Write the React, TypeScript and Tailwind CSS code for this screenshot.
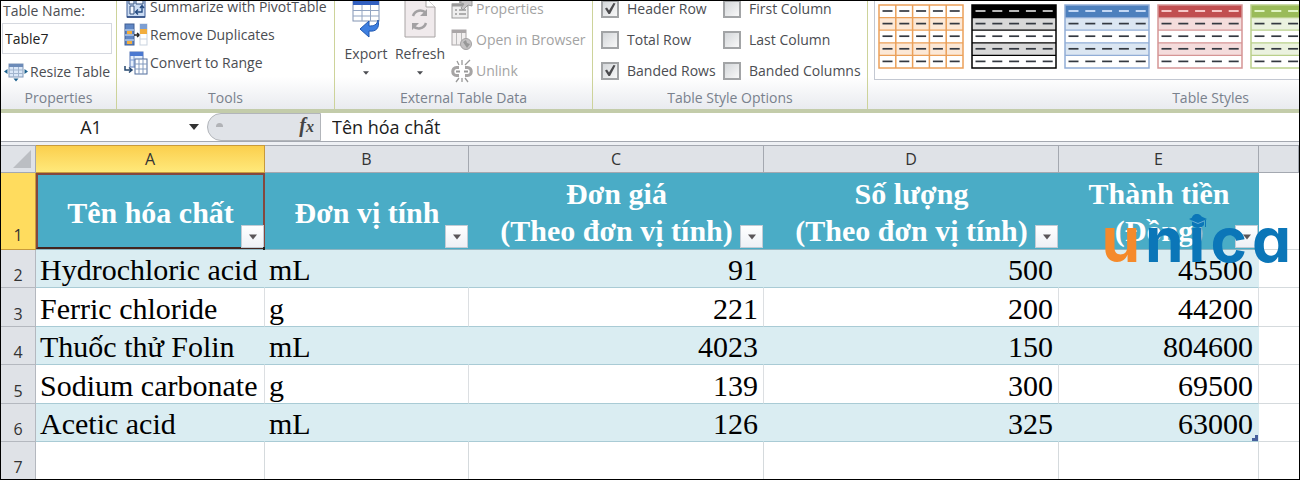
import { useState } from "react";
import type { ReactNode } from "react";

function PivotIcon() {
  return (
    <svg width="24" height="22" viewBox="0 0 24 22" className="shrink-0">
      <rect x="3" y="1" width="18" height="20" fill="#cbdcf3" stroke="#3c5d98" />
      <path d="M3 21h18" stroke="#28477e" strokeWidth="1.500" />
      <path d="M5 4h5v4H5zM12 4h7v4h-7zM6 10h4v8H6z" fill="#f4f8ff" stroke="#33517f" />
      <path d="M18 10v6h-6M16 12l2-2.500 2 2.500M14 13.500L11.500 16l2.500 2.500" fill="none" stroke="#264b80" strokeWidth="1.400" />
    </svg>
  );
}

function DuplicatesIcon() {
  return (
    <svg width="24" height="24" viewBox="0 0 24 24" className="shrink-0">
      <rect x="1" y="1" width="9" height="21" fill="#5f86c4" stroke="#405f93" />
      <path d="M1 7h9M1 12h9M1 17h9" stroke="#dce8f7" />
      <path d="M3 8h5v3H3zM3 18h5v3H3z" fill="#f1ad3e" />
      <path d="M10 12h5M13 10l2.500 2-2.500 2" stroke="#222" fill="none" strokeWidth="1.300" />
      <rect x="16" y="1" width="7" height="21" fill="#fff" stroke="#c9d3df" />
      <rect x="16" y="1" width="7" height="5" fill="#7e9fd2" />
      <rect x="16" y="6" width="7" height="5" fill="#f1ad3e" />
      <path d="M16 16h7" stroke="#c9d3df" />
    </svg>
  );
}

function ConvertIcon() {
  return (
    <svg width="24" height="24" viewBox="0 0 24 24" className="shrink-0">
      <rect x="6" y="1" width="13" height="15" fill="#e4eefb" stroke="#5474b4" />
      <rect x="6" y="1" width="13" height="4" fill="#4a78d0" />
      <path d="M6 9h7M10 5v11" stroke="#7c9bd0" />
      <rect x="11" y="8" width="12" height="15" fill="#fff" stroke="#506c9c" />
      <path d="M11 13h12M11 18h12M15 8v15M19 8v15" stroke="#8199be" />
      <path d="M1 15v4h6M5 16.500L8 19l-3 2.500" stroke="#25476f" fill="none" strokeWidth="1.500" />
    </svg>
  );
}

function ResizeIcon() {
  return (
    <svg width="24" height="20" viewBox="0 0 24 20" className="shrink-0">
      <rect x="5" y="2" width="14" height="13" fill="#dbe8f8" stroke="#8098b8" />
      <rect x="5" y="2" width="14" height="3" fill="#6c8bb8" />
      <path d="M5 8h14M5 11.500h14M9.500 5v10M14.500 5v10" stroke="#a1b5ce" />
      <path d="M3.500 7v5L0 9.500zM20.500 7v5l3.500-2.500zM9.500 16.500h5l-2.500 3z" fill="#1e628f" />
    </svg>
  );
}

function ExportIcon() {
  return (
    <svg width="30" height="42" viewBox="0 0 30 42">
      <rect x="2" y="1" width="26" height="22" fill="#fff" stroke="#8294b3" />
      <rect x="2" y="1" width="26" height="6" fill="#315fc0" />
      <path d="M2 12.500h26M2 18h26M11 7v16M19.500 7v16" stroke="#93a5c2" />
      <path d="M27 22c2 8-2 12-9 11v6l-9-8 9-8v5c5 0 8-1 9-6z" fill="#3e7fe0" stroke="#1f57b0" />
    </svg>
  );
}

function RefreshIcon() {
  return (
    <svg width="32" height="42" viewBox="0 0 32 42">
      <path d="M1 0h21l9 9v30H1z" fill="#f0eaec" stroke="#a8a4a4" />
      <path d="M22 0v9h9" fill="#fff" stroke="#a8a4a4" />
      <path d="M9 18c2-6 9-7 13-3M22 25c-2 6-9 7-13 3" fill="none" stroke="#a3a1a3" strokeWidth="2.500" />
      <path d="M23 11v7h-7zM8 32v-7h7z" fill="#a3a1a3" />
    </svg>
  );
}

function PropertiesIcon() {
  return (
    <svg width="24" height="24" viewBox="0 0 24 24" className="shrink-0">
      <rect x="2" y="7" width="16" height="14" fill="#eee" stroke="#999" />
      <path d="M2 8h16" stroke="#999" strokeWidth="3" />
      <path d="M5 13h2M9 13h7M5 17h2M9 17h7" stroke="#999" strokeWidth="1.500" />
      <path d="M9 5l7-3 6 2v5l-4-1-5 5-2-2 3-4z" fill="#c7c5c6" stroke="#999" />
    </svg>
  );
}

function BrowserIcon() {
  return (
    <svg width="24" height="24" viewBox="0 0 24 24" className="shrink-0">
      <rect x="2" y="2" width="14" height="15" fill="#f2efef" stroke="#aaa6a7" />
      <path d="M2 3.500h14" stroke="#aaa6a7" strokeWidth="3" />
      <path d="M6.500 5v12M11.500 5v12" stroke="#bbb" />
      <circle cx="16" cy="16" r="5.500" fill="#c4c2c3" stroke="#a3a1a2" />
      <path d="M13 14l3-2 1 3 3 1-3 4-2-3z" fill="#979797" />
    </svg>
  );
}

function UnlinkIcon() {
  return (
    <svg width="24" height="24" viewBox="0 0 24 24" className="shrink-0">
      <path d="M9 8.500H6.500c-5 0-5 8 0 8H9M15 8.500h2.500c5 0 5 8 0 8H15" fill="none" stroke="#a6a4a4" strokeWidth="3" />
      <path d="M6 12.500h4M14 12.500h4" stroke="#999" strokeWidth="2" />
      <path d="M12 1v5M7 2l2 4M20 1l-5 5M9 19l-3 4M12 19v4M15 19l3 4" stroke="#999" strokeWidth="1.300" />
    </svg>
  );
}

function DownArrow({ className }: { className: string }) {
  return (
    <svg width="10" height="6" viewBox="0 0 10 6" className={className}>
      <path d="M0 0h10L5 6z" fill="currentColor" />
    </svg>
  );
}

function Group({ title, className, children }: { title: string; className: string; children: ReactNode }) {
  return (
    <section className={`flex h-[108px] flex-col justify-end overflow-hidden ${className}`}>
      {children}
      <h2 className="flex h-[22px] shrink-0 items-center justify-center whitespace-nowrap text-sm text-[#79818d]">{title}</h2>
    </section>
  );
}

function ToolButton({ icon, label, disabled }: { icon: ReactNode; label: string; disabled?: boolean }) {
  return (
    <button type="button" disabled={disabled} className="flex h-7 shrink-0 items-center gap-0.5 whitespace-nowrap text-sm disabled:text-[#a3a3a3]">
      {icon}
      {label}
    </button>
  );
}

function Option({ label, initial }: { label: string; initial?: boolean }) {
  const [checked, setChecked] = useState(!!initial);
  return (
    <label className="flex h-[31px] shrink-0 items-center gap-2 whitespace-nowrap text-sm">
      <span className="relative flex">
        <input
          type="checkbox"
          checked={checked}
          onChange={(e) => setChecked(e.target.checked)}
          className="size-[18px] appearance-none border-2 border-[#a2a4a6] bg-gradient-to-br from-[#d4d7da] to-[#f8f8f8]"
        />
        {checked && (
          <svg width="18" height="18" viewBox="0 0 18 18" className="pointer-events-none absolute inset-0">
            <path d="M4 8.500l2-1 2 3L12.500 3l2 .5L9 14H7.500z" fill="#4c4c4f" />
          </svg>
        )}
      </span>
      {label}
    </label>
  );
}

type Style = { name: string; line: string; head: string; band: string; dash: string; grid?: boolean };

const styles: Style[] = [
  { name: "Orange grid", line: "#eba059", head: "#ffffff", band: "#fce8d6", dash: "#333840", grid: true },
  { name: "Black", line: "#000000", head: "#000000", band: "#d8d8d8", dash: "#d8d8d8" },
  { name: "Blue", line: "#91add6", head: "#4d80bd", band: "#dbe6f2", dash: "#d8e8ff" },
  { name: "Red", line: "#d59595", head: "#c14e50", band: "#f4dcdc", dash: "#ffdcdc" },
  { name: "Green", line: "#bad08b", head: "#9abb59", band: "#ebf2df", dash: "#edffd8" },
];

const five = [0, 1, 2, 3, 4];

function StyleThumb({ s }: { s: Style }) {
  return (
    <button type="button" aria-label={s.name} className="shrink-0">
      <svg width="86" height="65" viewBox="0 0 86 65">
        <rect x="1" y="1" width="84" height="63" fill="#fff" />
        {five.map((r) => (
          <g key={r}>
            <rect x="1" y={1 + r * 12.6} width="84" height="12.600" fill={r === 0 ? s.head : r % 2 ? s.band : "#fff"} />
            {r > 0 && <path d={`M1 ${1 + r * 12.6}h84`} stroke={s.line} strokeWidth="1.300" />}
            {five.map((c) => (
              <path key={c} d={`M${4.5 + c * 16.8} ${7 + r * 12.6}h10`} stroke={r === 0 ? s.dash : "#333840"} strokeWidth="1.700" />
            ))}
          </g>
        ))}
        {s.grid && <path d="M17.800 1v63M34.600 1v63M51.400 1v63M68.200 1v63" stroke={s.line} strokeWidth="1.500" />}
        <rect x="1" y="1" width="84" height="63" fill="none" stroke={s.line} strokeWidth="1.500" />
      </svg>
    </button>
  );
}

const headers = [
  ["Tên hóa chất"],
  ["Đơn vị tính"],
  ["Đơn giá", "(Theo đơn vị tính)"],
  ["Số lượng", "(Theo đơn vị tính)"],
  ["Thành tiền", "(Đồng)"],
];

const rows = [
  ["Hydrochloric acid", "mL", "91", "500", "45500"],
  ["Ferric chloride", "g", "221", "200", "44200"],
  ["Thuốc thử Folin", "mL", "4023", "150", "804600"],
  ["Sodium carbonate", "g", "139", "300", "69500"],
  ["Acetic acid", "mL", "126", "325", "63000"],
];

function Logo() {
  return (
    <div className="pointer-events-none absolute right-[8px] top-[194px] flex h-[90px] items-center gap-[5px] font-['Inter',sans-serif] text-[62px] font-bold leading-none text-[#0b76b8] [font-feature-settings:'cv11']">
      <span className="text-[#f58a2b]">u</span>
      <span>n</span>
      <span className="relative">
        i
        <svg width="18" height="16" viewBox="0 0 18 16" className="absolute left-0 top-1.5">
          <path d="M9 0l9 4-3 1.500V10c-3 4-9 4-12 0V5.500L0 4z" fill="#0b76b8" />
          <path d="M3 6l6 2.500L15 6" fill="none" stroke="#69aed6" />
          <path d="M16.500 5v7" stroke="#0b76b8" />
        </svg>
      </span>
      <span>c</span>
      <span>a</span>
    </div>
  );
}

export default function App() {
  return (
    <main className="relative h-screen overflow-hidden border border-black bg-white font-['Open_Sans','Noto_Sans',sans-serif] text-[#4b4d52]">
      <div className="flex border-b-4 border-[#c3ccaa] bg-gradient-to-b from-white from-70% to-[#e9ebef]">
        <Group title="Properties" className="w-[116px] shrink-0 border-r border-[#cdd39a]">
          <label htmlFor="table-name" className="flex h-6 shrink-0 items-center whitespace-nowrap pl-0.5 text-sm">Table Name:</label>
          <input id="table-name" defaultValue="Table7" className="mb-1 ml-px mr-1 h-[31px] shrink-0 border border-[#d5d8df] bg-white px-0.5 text-sm text-[#222]" />
          <div className="flex pb-px pl-[3px]">
            <ToolButton icon={<ResizeIcon />} label="Resize Table" />
          </div>
        </Group>
        <Group title="Tools" className="w-[218px] shrink-0 border-r border-[#cdd39a]">
          <div className="flex flex-col items-start pb-[10px] pl-[7px]">
            <ToolButton icon={<PivotIcon />} label="Summarize with PivotTable" />
            <ToolButton icon={<DuplicatesIcon />} label="Remove Duplicates" />
            <ToolButton icon={<ConvertIcon />} label="Convert to Range" />
          </div>
        </Group>
        <Group title="External Table Data" className="w-[258px] shrink-0 border-r border-[#cdd39a]">
          <div className="flex items-end pl-1">
            <button type="button" className="flex w-[54px] flex-col items-center pb-[11px] text-sm">
              <ExportIcon />
              <span className="flex h-7 items-center">Export</span>
              <DownArrow className="mt-0.5 w-1.5" />
            </button>
            <button type="button" className="flex w-[54px] flex-col items-center pb-[11px] text-sm">
              <RefreshIcon />
              <span className="flex h-7 items-center">Refresh</span>
              <DownArrow className="mt-0.5 w-1.5" />
            </button>
            <div className="flex flex-col gap-[3px] pb-0.5 pl-[3px]">
              <ToolButton icon={<PropertiesIcon />} label="Properties" disabled />
              <ToolButton icon={<BrowserIcon />} label="Open in Browser" disabled />
              <ToolButton icon={<UnlinkIcon />} label="Unlink" disabled />
            </div>
          </div>
        </Group>
        <Group title="Table Style Options" className="w-[275px] shrink-0 border-r border-[#cdd39a]">
          <div className="flex pb-px pl-2">
            <div className="flex w-[122px] flex-col">
              <Option label="Header Row" initial />
              <Option label="Total Row" />
              <Option label="Banded Rows" initial />
            </div>
            <div className="flex flex-col">
              <Option label="First Column" />
              <Option label="Last Column" />
              <Option label="Banded Columns" />
            </div>
          </div>
        </Group>
        <section className="flex h-[108px] min-w-0 flex-1 flex-col overflow-hidden pl-1.5">
          <div className="flex h-[79px] items-start gap-[7px] overflow-hidden border-b border-l border-[#c3c8d2] bg-white pl-[3px] pt-[3px]">
            {styles.map((s) => (
              <StyleThumb key={s.name} s={s} />
            ))}
          </div>
          <h2 className="flex h-[29px] items-center justify-end pr-[50px] pt-[7px] text-sm text-[#79818d]">Table Styles</h2>
        </section>
      </div>

      <div className="flex h-7 bg-white text-[#1c1c1c]">
        <div className="flex w-[206px] shrink-0 items-center">
          <input aria-label="Name Box" defaultValue="A1" className="min-w-0 flex-1 pr-2 text-center text-lg leading-7" />
          <button type="button" aria-label="Open name list" className="mr-2">
            <DownArrow className="text-[#333]" />
          </button>
        </div>
        <div className="flex w-[114px] shrink-0 items-center justify-between rounded-l-full border border-[#b2b5ba] bg-[#e0e3e8] pl-2 pr-1.5">
          <span className="mb-1 h-1 w-[7px] rounded-t-sm bg-[#b1b3b7]" />
          <button type="button" aria-label="Insert Function" className="font-['Liberation_Serif',serif] text-xl font-bold italic leading-none text-[#444]">
            f<span className="text-base">x</span>
          </button>
        </div>
        <input aria-label="Formula Bar" defaultValue="Tên hóa chất" className="min-w-0 flex-1 pl-[11px] text-lg leading-7" />
      </div>
      <div className="h-1 border-t border-[#a4a8b0] bg-[#eef0f4]" />

      <table className="w-full table-fixed border-separate border-spacing-0">
        <colgroup>
          <col className="w-[35px]" />
          <col className="w-[229px]" />
          <col className="w-[204px]" />
          <col className="w-[295px]" />
          <col className="w-[295px]" />
          <col className="w-[200px]" />
          <col />
        </colgroup>
        <thead>
          <tr className="h-7 bg-[#dfe2e7] text-base text-[#333]">
            <th className="border-b border-r border-t border-[#a4a8b0] p-0 pr-1">
              <svg width="18" height="18" viewBox="0 0 18 18" className="ml-auto">
                <path d="M18 0v18H0z" fill="#bbbec3" />
              </svg>
            </th>
            {["A", "B", "C", "D", "E", ""].map((c, i) => (
              <th
                key={i}
                scope="col"
                className={`border-b border-r border-t p-0 font-normal leading-none ${
                  c === "A" ? "border-[#c79a3c] bg-gradient-to-b from-[#fbcf4c] to-[#ffe97a]" : "border-[#a4a8b0]"
                }`}
              >
                {c}
              </th>
            ))}
          </tr>
        </thead>
        <tbody className="font-['Liberation_Serif',serif] text-[30px] text-black">
          <tr className="h-[77px]">
            <th scope="row" className="border-b border-r border-[#c79a3c] bg-[#ffdc5e] p-0 pb-0.5 align-bottom font-['Open_Sans',sans-serif] text-base font-normal text-[#333]">1</th>
            {headers.map((lines, i) => (
              <th
                key={i}
                className="relative whitespace-nowrap border-b border-[#8fb5c1] bg-[#4aacc6] p-0 pt-0.5 font-bold leading-[37px] text-white"
              >
                {lines.map((l) => (
                  <div key={l}>{l}</div>
                ))}
                {i === 0 && (
                  <span className="pointer-events-none absolute inset-0 border-2 border-[#84483f] border-b-[#43251f]" />
                )}
                <button
                  type="button"
                  aria-label={`Filter ${lines[0]}`}
                  className="absolute bottom-px right-px flex size-[23px] items-center justify-center border border-[#c3ccd5] bg-gradient-to-b from-white to-[#eef1f6] text-[#5b5659]"
                >
                  <DownArrow className="w-2" />
                </button>
                {i === 0 && <span className="absolute -bottom-0.5 -right-0.5 size-1 bg-[#222]" />}
              </th>
            ))}
            <td className="border-b border-[#d5dadd]" />
          </tr>
          {rows.map((row, r) => (
            <tr key={r} className={`${r % 2 ? "h-[39px]" : "h-[38px]"}`}>
              <th scope="row" className="border-b border-r border-[#b4b8bf] bg-[#dfe2e7] p-0 align-bottom font-['Open_Sans',sans-serif] text-base font-normal text-[#333]">{r + 2}</th>
              {row.map((cell, c) => (
                <td
                  key={c}
                  className={`relative whitespace-nowrap border-b border-[#a9cbd5] p-0 pt-0.5 leading-[35px] ${c < 2 ? "pl-1" : "pr-[5px] text-right"} ${
                    r % 2 ? "border-r border-r-[#dcdfe2] bg-white" : "border-r border-r-[#daedf2] bg-[#daedf2]"
                  }`}
                >
                  {cell}
                  {r === 4 && c === 4 && (
                    <svg width="6" height="6" viewBox="0 0 6 6" className="absolute bottom-0 right-0">
                      <path d="M3 0h3v6H0V3h3z" fill="#46609c" />
                    </svg>
                  )}
                </td>
              ))}
              <td className="border-b border-[#d5dadd]" />
            </tr>
          ))}
          <tr className="h-[39px]">
            <th scope="row" className="border-r border-[#b4b8bf] bg-[#dfe2e7] p-0 pb-0.5 align-bottom font-['Open_Sans',sans-serif] text-base font-normal text-[#333]">7</th>
            {five.map((c) => (
              <td key={c} className="border-r border-[#d5dadd]" />
            ))}
            <td />
          </tr>
        </tbody>
      </table>
      <Logo />
    </main>
  );
}
